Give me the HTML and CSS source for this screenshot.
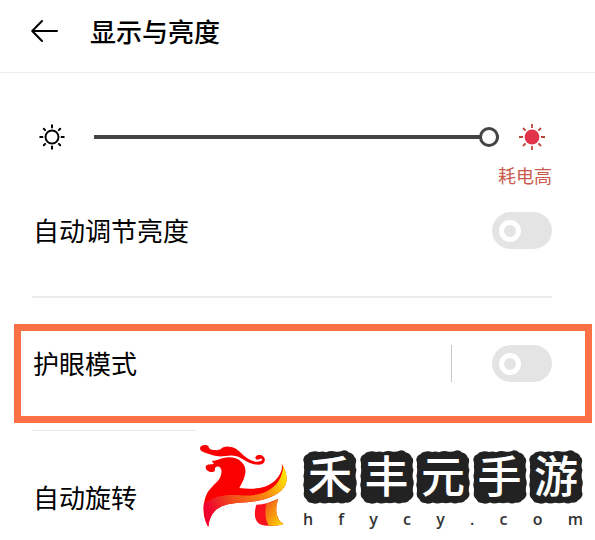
FILE: index.html
```html
<!DOCTYPE html>
<html lang="zh-CN">
<head>
    <meta charset="utf-8">
    <title>显示与亮度</title>
    <link rel="stylesheet" href="styles.css">
</head>
<body>
    <header class="header">
        <button class="back" type="button" aria-label="返回">
            <svg width="28" height="24" viewBox="0 0 28 24" fill="none" stroke="#000" stroke-width="2" stroke-linecap="round" stroke-linejoin="round">
                <path d="M26 12H1.2M11 2L1.2 12L11 22"/>
            </svg>
        </button>
        <h1>显示与亮度</h1>
    </header>

    <main>
        <div class="brightness">
            <svg width="26" height="26" viewBox="0 0 26 26" fill="none" stroke="#000" stroke-width="2" stroke-linecap="round">
                <circle cx="13" cy="13" r="6.5"/>
                <path d="M13 1.2V3.4M13 22.6V24.8M1.2 13H3.4M22.6 13H24.8M4.8 4.8L6.1 6.1M19.9 19.9L21.2 21.2M4.8 21.2L6.1 19.9M19.9 6.1L21.2 4.8"/>
            </svg>
            <input class="slider" type="range" min="0" max="100" value="100" aria-label="亮度">
            <svg width="26" height="26" viewBox="0 0 26 26" fill="none" stroke="#b8443c" stroke-width="1.8">
                <circle cx="13" cy="13" r="7.4" fill="#e2334a" stroke="none"/>
                <path d="M13 0V4M13 22V26M0 13H4M22 13H26M4 4L6.6 6.6M19.4 19.4L22 22M4 22L6.6 19.4M19.4 6.6L22 4"/>
            </svg>
        </div>
        <p class="power">耗电高</p>

        <div class="row">
            <label for="auto">自动调节亮度</label>
            <input class="switch" type="checkbox" id="auto">
        </div>
        <hr class="line thick">

        <div class="highlight">
            <label for="eye">护眼模式</label>
            <span class="separator"></span>
            <input class="switch" type="checkbox" id="eye">
        </div>

        <div class="last">
            <hr class="line">
            <div class="rotate">自动旋转</div>

            <div class="logo">
                <svg class="dragon" width="90" height="87" viewBox="30 35 270 261">
                    <defs>
                        <linearGradient id="fire" x1="0" y1="0.6" x2="1" y2="0.2">
                            <stop offset="0" stop-color="#f00030"/>
                            <stop offset="0.3" stop-color="#f04a1c"/>
                            <stop offset="0.7" stop-color="#f88c12"/>
                            <stop offset="1" stop-color="#ffe400"/>
                        </linearGradient>
                        <linearGradient id="leg" x1="0" y1="0" x2="1" y2="1">
                            <stop offset="0" stop-color="#f04a1c"/>
                            <stop offset="1" stop-color="#ffe400"/>
                        </linearGradient>
                    </defs>
                    <path fill="#fb0000" d="M30 54C31 43 48 42 55 47C56 55 62 59 72 59C82 60 88 59 92 57C98 48 112 47 122 50C135 50 147 62 157 72C170 84 185 93 197 94C210 95 218 91 216 86C213 81 208 88 201 88C193 86 195 75 206 74C218 73 227 82 224 92C221 104 206 105 192 102C172 98 158 84 140 78C120 71 102 80 85 78C70 77 60 72 50 69C38 66 30 61 30 54Z"/>
                    <path fill="#fb0000" d="M47 110C48 101 60 103 70 101C74 99 66 96 66 92C80 92 86 86 98 84C110 80 125 80 137 84C158 92 169 110 166 128C164 145 155 160 148 173C190 178 225 175 250 155C268 140 279 120 275 100C288 120 294 145 286 165C270 192 240 205 200 212C160 219 130 216 100 226C72 236 58 258 55 290C42 270 36 235 44 210C50 180 72 165 85 150C96 136 98 116 88 110C80 106 72 111 75 122C65 129 47 123 47 110Z"/>
                    <path fill="url(#fire)" d="M42 221C66 197 110 191 150 195C215 201 266 175 277 125Q280 113 278 105C288 122 294 145 286 165C270 192 240 205 200 212C160 219 130 216 100 226C72 236 58 258 55 290C44 272 40 246 42 221Z"/>
                    <path fill="#f8101c" d="M199 223C222 222 244 215 265 205C253 235 258 270 281 281C258 289 225 288 210 282C190 270 193 242 199 223Z"/>
                    <path fill="url(#leg)" d="M229 219C242 217 254 211 265 205C253 235 258 270 281 281C268 286 251 287 236 286C224 265 225 240 229 219Z"/>
                </svg>
                <div class="brand">
                    <svg width="0" height="0" class="defs">
                        <symbol id="stamp" viewBox="0 0 54 54">
                            <path d="M8 2Q12 .5 16 2Q20 1 23 2.2Q28 .4 32 1.6Q36 2.4 40 .4Q44 0 46 2.5Q50 3 51.5 7Q54 9 52.8 13Q52 17 53.5 20Q52 25 53 29Q54.5 33 53 37Q52.4 41 53.6 44Q53 48 49.5 50Q47 53.5 43 52.6Q39 54.5 35 52.6Q30 53.8 26 52.8Q21 54.2 17 52.6Q13 54.6 9 53Q5 53 3.5 49.5Q0 47 .8 43Q1.4 39 .2 35Q1.6 30 .4 26Q1.8 21 .8 17Q1.6 13 .2 10Q1 5 4.5 4.2Q6 2 8 2Z"/>
                        </symbol>
                    </svg>
                    <div class="stamps">
                        <span class="stamp"><svg><use href="#stamp"/></svg><b>禾</b></span>
                        <span class="stamp"><svg><use href="#stamp"/></svg><b>丰</b></span>
                        <span class="stamp"><svg><use href="#stamp"/></svg><b>元</b></span>
                        <span class="stamp"><svg><use href="#stamp"/></svg><b>手</b></span>
                        <span class="stamp"><svg><use href="#stamp"/></svg><b>游</b></span>
                    </div>
                    <div class="domain">
                        <span>h</span><span>f</span><span>y</span><span>c</span><span>y</span><span>.</span><span>c</span><span>o</span><span>m</span>
                    </div>
                </div>
            </div>
        </div>
    </main>
</body>
</html>
```
FILE: styles.css
```css
* {
    box-sizing: border-box;
}

body {
    margin: 0;
    background-color: #fff;
    color: #000;
    font-family: "Noto Sans CJK SC", sans-serif;
    font-size: 26px;
    line-height: 36px;
}

.header {
    display: flex;
    align-items: center;
    gap: 31px;
    padding: 13px 31px 23px;
    border-bottom: 1px solid #eee;
}

.back {
    display: flex;
    padding: 0;
    border: none;
    background: none;
    cursor: pointer;
}

h1 {
    margin: 0;
    font-size: 26px;
    font-weight: 500;
}

.brightness {
    display: flex;
    align-items: center;
    padding: 51px 50px 0 39px;
}

.slider {
    flex: 1;
    min-width: 0;
    height: 20px;
    margin: 0 20px 0 29px;
    appearance: none;
    background: linear-gradient(#444, #444) center / 100% 4px no-repeat;
    border-radius: 2px;
    cursor: pointer;
}

.slider::-webkit-slider-thumb {
    appearance: none;
    box-sizing: border-box;
    width: 20px;
    height: 20px;
    border: 3px solid #444;
    border-radius: 50%;
    background-color: #fff;
}

.power {
    margin: 13px 43px 25px;
    color: #c95a4c;
    font-size: 18px;
    line-height: 24px;
    text-align: right;
}

.row {
    display: flex;
    align-items: center;
    justify-content: space-between;
    margin: 0 43px 47px 33px;
}

label {
    padding-bottom: 1px;
    line-height: 34px;
}

.switch {
    appearance: none;
    display: flex;
    align-items: center;
    width: 60px;
    height: 37px;
    margin: 0;
    padding-left: 7px;
    border-radius: 19px;
    background-color: #e4e4e4;
    cursor: pointer;
}

.switch::before {
    content: "";
    width: 12px;
    height: 12px;
    border: 5px solid #fff;
    border-radius: 50%;
}

.switch:checked {
    justify-content: flex-end;
    padding: 0 7px 0 0;
    background-color: #2ab673;
}

.line {
    height: 1px;
    margin: 0 43px 0 32px;
    border: none;
    background-color: #e6e6e6;
}

.thick {
    height: 2px;
    background-color: #ececec;
}

.highlight {
    display: flex;
    align-items: center;
    margin: 26px 3px 7px 14px;
    padding: 14px 33px 34px 12px;
    border: 7px solid #fb7044;
}

.separator {
    width: 1px;
    height: 37px;
    margin: 0 40px 0 auto;
    background-color: #c8c8c8;
}

.last {
    position: relative;
}

.rotate {
    padding: 48px 33px 20px;
}

/* logo covers the end of the last line */
.logo {
    position: absolute;
    top: 0;
    right: 0;
    display: flex;
    align-items: flex-start;
    gap: 13px;
    padding: 12px 12px 0 4px;
    background-color: #fff;
}

.brand {
    width: 280px;
    padding-top: 8px;
}

.defs {
    position: absolute;
}

.stamps,
.domain {
    display: flex;
    justify-content: space-between;
}

.stamp {
    display: grid;
    width: 54px;
    height: 54px;
}

.stamp svg,
.stamp b {
    grid-area: 1 / 1;
    width: 54px;
    height: 54px;
}

.stamp svg {
    fill: #222;
}

.stamp b {
    z-index: 1;
    color: #fff;
    font-size: 44px;
    font-weight: 500;
    line-height: 48px;
    text-align: center;
}

.domain {
    color: #333;
    font-family: "Open Sans", sans-serif;
    font-size: 16px;
    font-weight: 600;
    line-height: 30px;
}
```
